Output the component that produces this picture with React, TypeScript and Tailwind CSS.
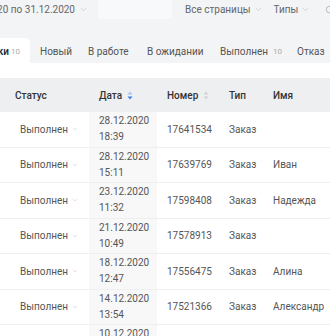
import React from "react";
import { ChevronDown, Search } from "lucide-react";

const rows = [
  { date: "28.12.2020", time: "18:39", num: "17641534", name: "" },
  { date: "28.12.2020", time: "15:11", num: "17639769", name: "Иван" },
  { date: "23.12.2020", time: "11:32", num: "17598408", name: "Надежда" },
  { date: "21.12.2020", time: "10:49", num: "17578913", name: "" },
  { date: "18.12.2020", time: "12:47", num: "17556475", name: "Алина" },
  { date: "14.12.2020", time: "13:54", num: "17521366", name: "Александр" },
  { date: "10.12.2020", time: "09:20", num: "17490012", name: "" },
];

function SortIcon({ active }: { active?: boolean }) {
  return (
    <svg width="6" height="9" viewBox="0 0 6 9" className="ml-[5px]">
      <path d="M3 0.5 L5.5 3.5 H0.5 Z" fill={active ? "#a9c4f5" : "#d2d4d8"} />
      <path d="M3 8.5 L5.5 5.5 H0.5 Z" fill={active ? "#3b7ff0" : "#d2d4d8"} />
    </svg>
  );
}

export default function App() {
  return (
    <div className="w-[330px] h-[336px] overflow-hidden bg-white font-['Roboto',sans-serif] text-[10px]">
      <div className="bg-[#f3f4f6] h-[63px] flex flex-col">
        <div className="h-[19px] flex items-center text-[#666] text-[10px] whitespace-nowrap">
          <div className="w-[88px] flex items-center justify-end overflow-hidden shrink-0">
            <span>с 01.12.2020 по 31.12.2020</span>
            <ChevronDown size={9} className="ml-[4px] shrink-0 text-[#bbb]" strokeWidth={1.5} />
          </div>
          <div className="w-[74px] h-[19px] bg-[#f8f9fa] ml-[10px] shrink-0" />
          <div className="flex items-center ml-[13px] shrink-0">
            <span>Все страницы</span>
            <ChevronDown size={9} className="ml-[3px] text-[#bbb]" strokeWidth={1.5} />
          </div>
          <div className="flex items-center ml-[11px] shrink-0">
            <span>Типы</span>
            <ChevronDown size={9} className="ml-[3px] text-[#bbb]" strokeWidth={1.5} />
          </div>
          <Search size={10} className="ml-[15px] shrink-0 text-[#999]" strokeWidth={1.5} />
        </div>
        <div className="mt-auto h-[25px] flex items-stretch whitespace-nowrap text-[#555] text-[10px]">
          <div className="w-[30px] shrink-0 flex items-center justify-end overflow-hidden bg-white rounded-tr-[5px] pr-[10px] pt-[2px]">
            <span className="text-[#222] font-medium">Все&nbsp;заявки</span>
            <span className="ml-[2px] text-[8px] text-[#aaa]">10</span>
          </div>
          <div className="flex items-center ml-[10px] w-[48px] shrink-0 pt-[2px]">Новый</div>
          <div className="flex items-center w-[59px] shrink-0 pt-[2px]">В работе</div>
          <div className="flex items-center w-[73px] shrink-0 pt-[2px]">В ожидании</div>
          <div className="flex items-center w-[77px] shrink-0 pt-[2px]">
            <span>Выполнен</span>
            <span className="ml-[5px] text-[8px] text-[#aaa]">10</span>
          </div>
          <div className="flex items-center pt-[2px]">Отказ</div>
        </div>
      </div>
      <div className="h-[15px]" />
      <div className="h-[34px] bg-[#eeeff1] flex items-center text-[#333] font-medium whitespace-nowrap">
        <div className="w-[89px] pl-[15px]">Статус</div>
        <div className="w-[68px] pl-[10px] flex items-center">
          Дата <SortIcon active />
        </div>
        <div className="w-[62px] pl-[10px] flex items-center">
          Номер <SortIcon />
        </div>
        <div className="w-[44px] pl-[10px]">Тип</div>
        <div className="flex-1 pl-[10px]">Имя</div>
      </div>
      {rows.map((r, i) => (
        <div
          key={i}
          className="h-[35.5px] flex items-stretch border-b border-[#eeeff1] text-[#555] whitespace-nowrap"
        >
          <div className="w-[89px] pl-[20px] flex items-center">
            <span>Выполнен</span>
            <ChevronDown size={8} className="ml-[3px] text-[#c4c4c4]" strokeWidth={1.5} />
          </div>
          <div className="w-[68px] pl-[10px] bg-[#f8f8f9] flex flex-col justify-center leading-4">
            <span>{r.date}</span>
            <span>{r.time}</span>
          </div>
          <div className="w-[62px] pl-[10px] flex items-center">{r.num}</div>
          <div className="w-[44px] pl-[10px] flex items-center">Заказ</div>
          <div className="flex-1 pl-[10px] flex items-center">{r.name}</div>
        </div>
      ))}
    </div>
  );
}
